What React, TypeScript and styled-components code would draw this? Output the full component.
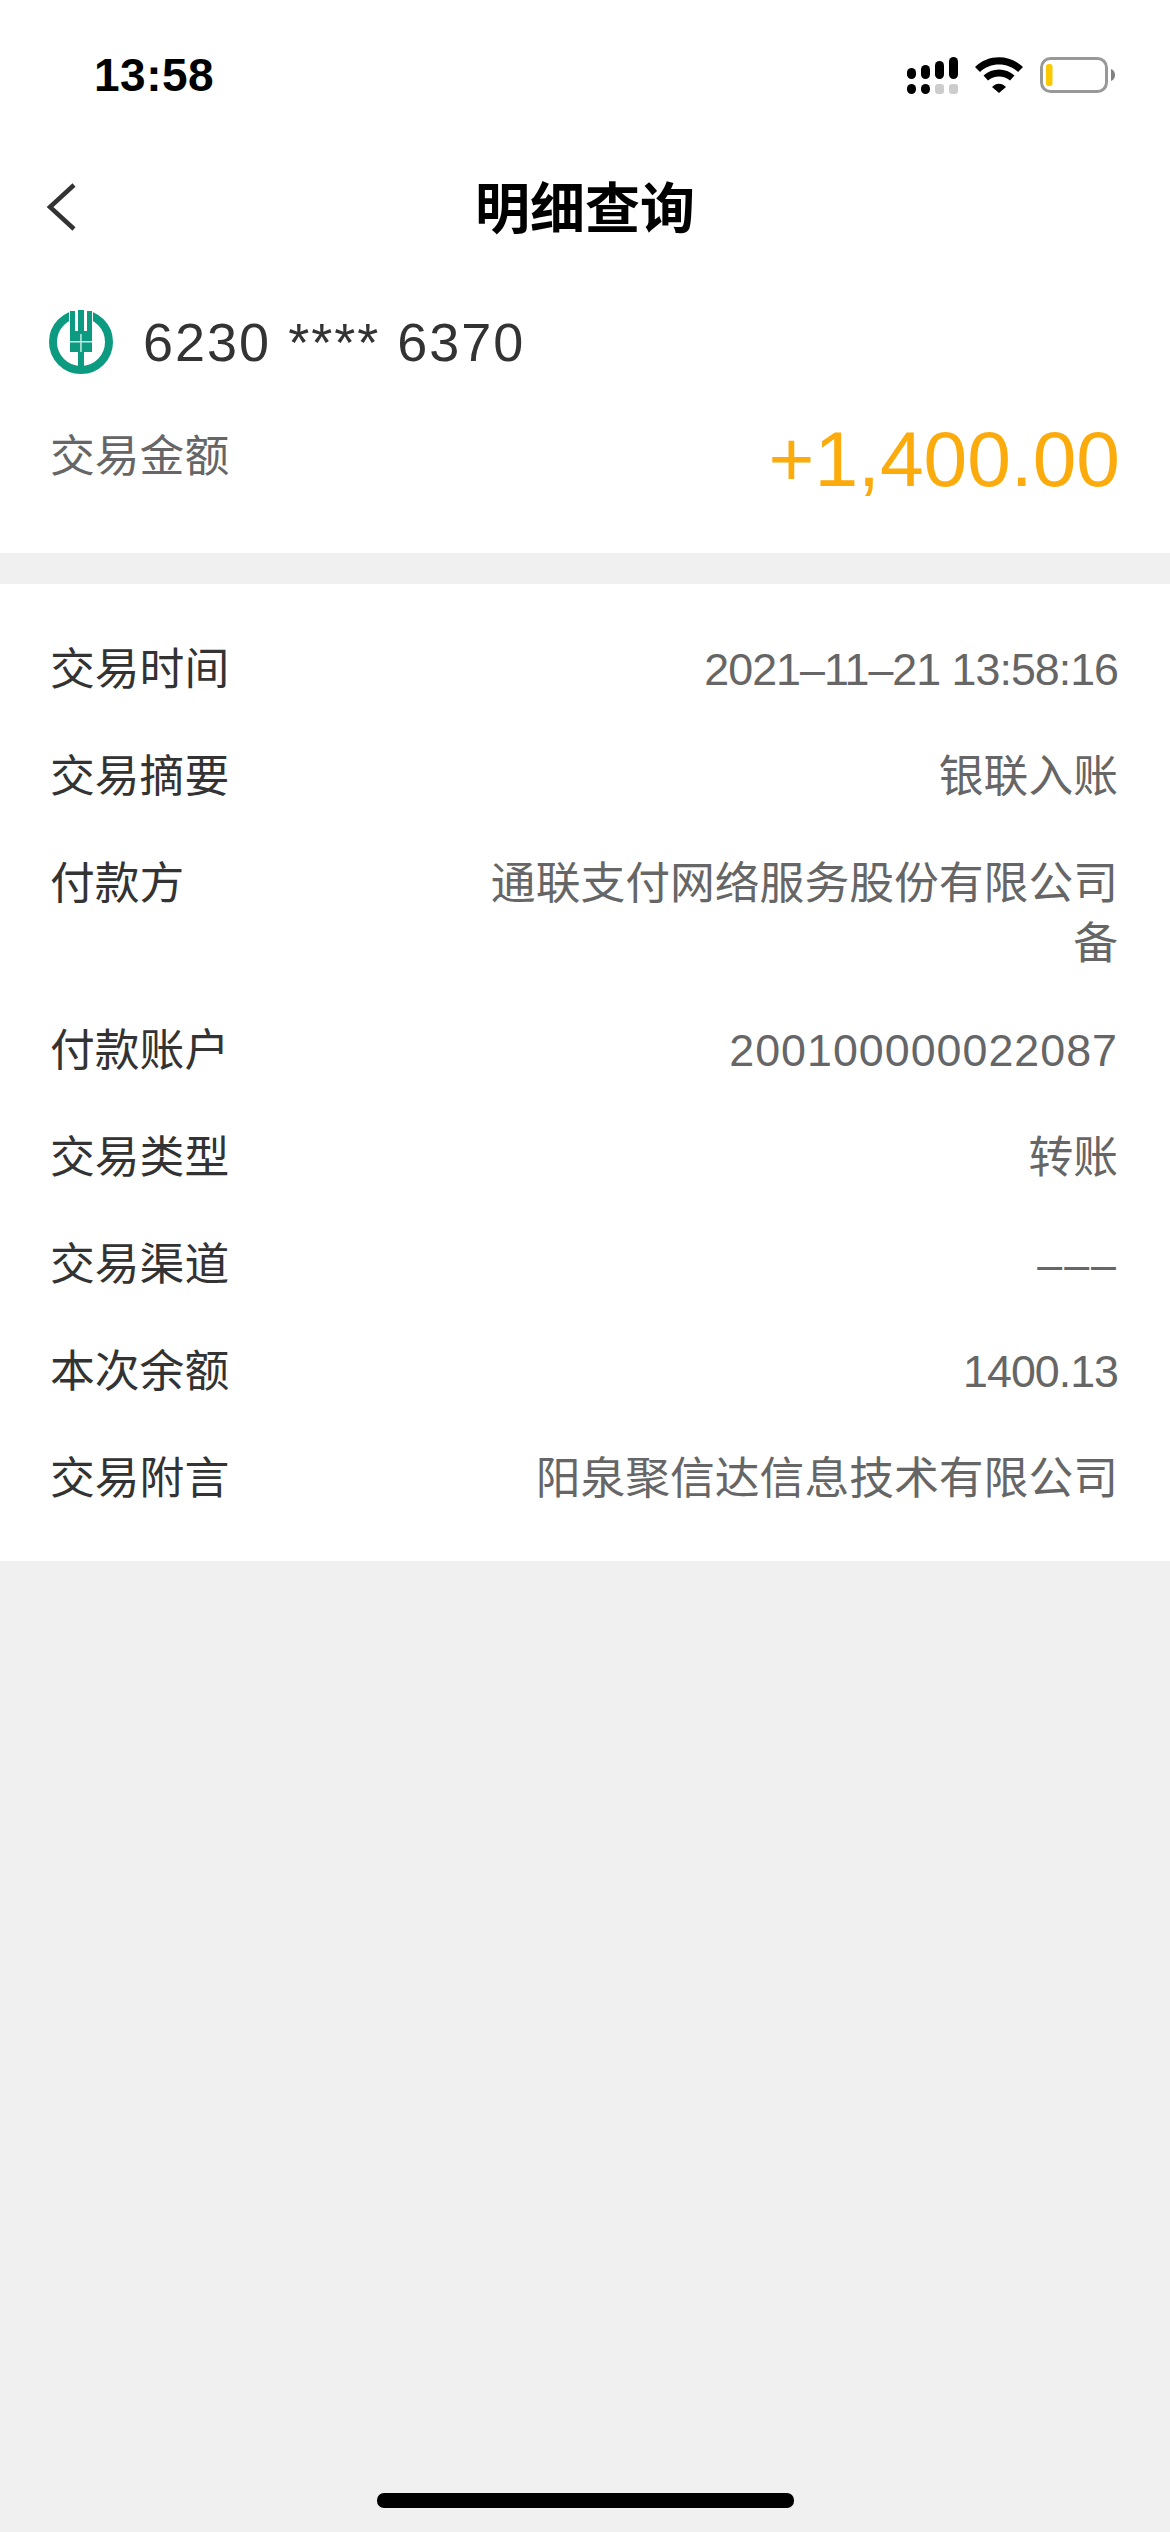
import styled, { createGlobalStyle } from "styled-components";

const GlobalStyle = createGlobalStyle`
  html, body {
    margin: 0;
    padding: 0;
    background: #f0f0f0;
  }
  body {
    font-family: "Liberation Sans", "Noto Sans CJK SC", sans-serif;
  }
`;

type DetailRow = {
  label: string;
  value: string;
  tracking?: number;
};

const rows: DetailRow[] = [
  { label: "交易时间", value: "2021–11–21 13:58:16", tracking: -1 },
  { label: "交易摘要", value: "银联入账" },
  { label: "付款方", value: "通联支付网络服务股份有限公司备" },
  { label: "付款账户", value: "200100000022087", tracking: 1 },
  { label: "交易类型", value: "转账" },
  { label: "交易渠道", value: "–––", tracking: 2 },
  { label: "本次余额", value: "1400.13", tracking: -1 },
  { label: "交易附言", value: "阳泉聚信达信息技术有限公司" },
];

const signalBars = [
  { x: 0, top: 11 },
  { x: 14, top: 8 },
  { x: 28, top: 4 },
  { x: 42, top: 0 },
];

function SignalIcon() {
  return (
    <svg width="51" height="37" viewBox="0 0 51 37">
      {signalBars.map((bar) => (
        <rect key={bar.x} x={bar.x} y={bar.top} width="9" height={22 - bar.top} rx="4.5" fill="#000" />
      ))}
      <rect x="0" y="27" width="9" height="10" rx="4.5" fill="#000" />
      <rect x="14" y="27" width="9" height="10" rx="4.5" fill="#000" />
      <rect x="28" y="27" width="9" height="10" rx="3" fill="#ccc" />
      <rect x="42" y="27" width="9" height="10" rx="3" fill="#ccc" />
    </svg>
  );
}

function WifiIcon() {
  return (
    <svg width="48" height="36" viewBox="0 0 48 36">
      <path d="M0 10 C13 -3 35 -3 48 10 L43 15 C33 5 15 5 5 15 Z" fill="#000" />
      <path d="M8.5 18.5 C17 10.5 31 10.5 39.5 18.5 L35 23.5 C29 18 19 18 13 23.5 Z" fill="#000" />
      <path d="M17 30 C21 25.5 27 25.5 31 30 L24 36 Z" fill="#000" />
    </svg>
  );
}

function BatteryIcon() {
  return (
    <svg width="75" height="36" viewBox="0 0 75 36">
      <rect x="1.5" y="1.5" width="65" height="33" rx="9" fill="none" stroke="#999" strokeWidth="3" />
      <rect x="6" y="7" width="6.5" height="22" rx="2.5" fill="#fcc800" />
      <path d="M71 12 C74 13 75 16 75 18 C75 20 74 23 71 24 Z" fill="#808080" />
    </svg>
  );
}

function BankLogo() {
  return (
    <svg width="64" height="64" viewBox="0 0 64 64">
      <circle cx="32" cy="32" r="28" fill="none" stroke="#0c9a80" strokeWidth="8" />
      <rect x="20" y="0" width="24" height="22" fill="#fff" />
      <rect x="21" y="1" width="5" height="22" fill="#0c9a80" />
      <rect x="29" y="0" width="6" height="22" fill="#0c9a80" />
      <rect x="38" y="1" width="5" height="22" fill="#0c9a80" />
      <rect x="21" y="21" width="22" height="21" fill="#0c9a80" />
      <rect x="29" y="42" width="6" height="20" fill="#0c9a80" />
      <rect x="21" y="31" width="22" height="1.5" fill="#c9ebe3" />
      <rect x="31.2" y="24" width="1.5" height="18" fill="#c9ebe3" />
    </svg>
  );
}

export default function App() {
  return (
    <Page>
      <GlobalStyle />
      <Header>
        <StatusBar>
          <Clock>13:58</Clock>
          <StatusIcons>
            <SignalIcon />
            <WifiIcon />
            <BatteryIcon />
          </StatusIcons>
        </StatusBar>
        <NavBar>
          <BackButton type="button" aria-label="返回">
            <svg width="32" height="50" viewBox="0 0 32 50">
              <path d="M28 3 L4 25 L28 47" fill="none" stroke="#333" strokeWidth="4.5" />
            </svg>
          </BackButton>
          <NavTitle>明细查询</NavTitle>
        </NavBar>
        <Summary>
          <CardLine>
            <BankLogo />
            <CardNumber>6230 **** 6370</CardNumber>
          </CardLine>
          <AmountLine>
            <AmountLabel>交易金额</AmountLabel>
            <Amount>+1,400.00</Amount>
          </AmountLine>
        </Summary>
      </Header>

      <DetailList>
        {rows.map((row) => (
          <Row key={row.label}>
            <RowLabel>{row.label}</RowLabel>
            <RowValue $tracking={row.tracking ?? 0}>{row.value}</RowValue>
          </Row>
        ))}
      </DetailList>

      <Filler>
        <HomeIndicator />
      </Filler>
    </Page>
  );
}

const Page = styled.div`
  display: flex;
  flex-direction: column;
  width: 1170px;
  height: 2532px;
  overflow: hidden;
  background: #f0f0f0;
`;

const Header = styled.header`
  background: #fff;
  height: 553px;
`;

const StatusBar = styled.div`
  display: flex;
  align-items: center;
  justify-content: space-between;
  height: 150px;
  padding: 0 55px 0 94px;
  box-sizing: border-box;
`;

const Clock = styled.div`
  font-size: 46px;
  font-weight: 700;
  color: #000;
  letter-spacing: 0.5px;
`;

const StatusIcons = styled.div`
  display: flex;
  align-items: center;
  gap: 17px;
`;

const NavBar = styled.div`
  position: relative;
  display: flex;
  align-items: center;
  justify-content: center;
  height: 108px;
`;

const BackButton = styled.button`
  position: absolute;
  left: 46px;
  top: 32px;
  display: flex;
  padding: 0;
  border: none;
  background: transparent;
`;

const NavTitle = styled.div`
  font-size: 55px;
  font-weight: 700;
  color: #000;
`;

const Summary = styled.div`
  padding: 52px 50px 0 50px;
`;

const CardLine = styled.div`
  display: flex;
  align-items: center;
  gap: 30px;
  margin-left: -1px;
`;

const CardNumber = styled.div`
  font-size: 54px;
  letter-spacing: 2px;
  color: #333;
`;

const AmountLine = styled.div`
  display: flex;
  align-items: center;
  justify-content: space-between;
  margin-top: 40px;
`;

const AmountLabel = styled.div`
  margin-bottom: 14px;
  font-size: 44.8px;
  color: #666;
`;

const Amount = styled.div`
  font-size: 78.5px;
  color: #fbab0b;
`;

const DetailList = styled.section`
  display: flex;
  flex-direction: column;
  gap: 47px;
  margin-top: 31px;
  padding: 55px 52px 53px 50px;
  background: #fff;
`;

const Row = styled.div`
  display: flex;
  justify-content: space-between;
  gap: 60px;
`;

const RowLabel = styled.div`
  flex: none;
  font-size: 44.8px;
  line-height: 60px;
  color: #333;
`;

const RowValue = styled.div<{ $tracking: number }>`
  width: 640px;
  font-size: 44.8px;
  line-height: 60px;
  letter-spacing: ${({ $tracking }) => $tracking}px;
  color: #666;
  text-align: right;
`;

const Filler = styled.div`
  display: flex;
  flex: 1;
  align-items: flex-end;
  justify-content: center;
  padding-bottom: 24px;
`;

const HomeIndicator = styled.div`
  width: 417px;
  height: 15px;
  border-radius: 7px;
  background: #000;
`;
